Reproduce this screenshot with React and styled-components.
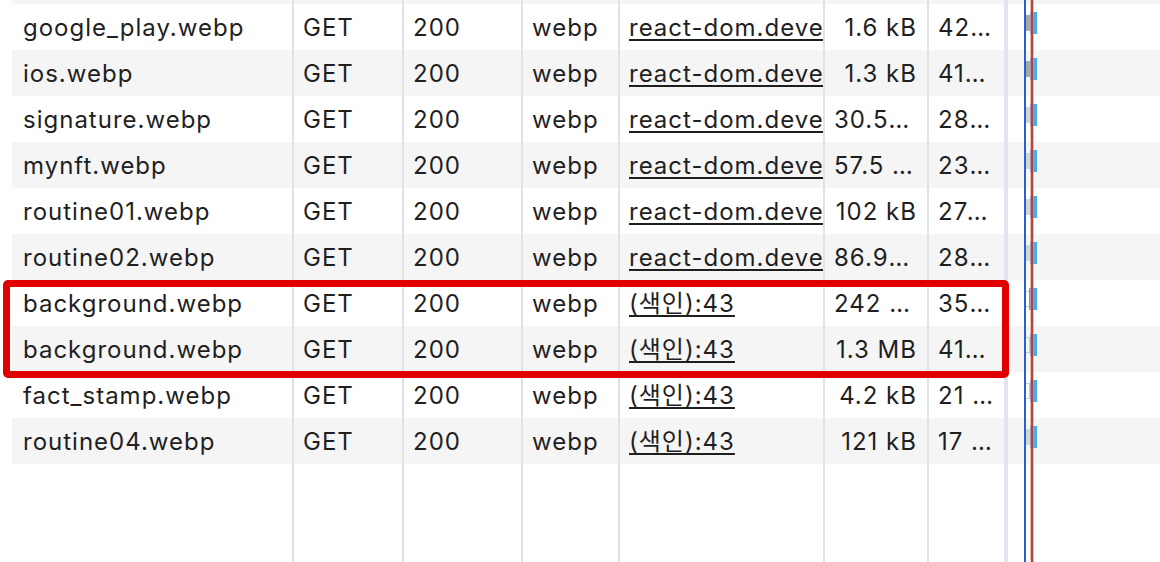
import React from 'react';
import styled, { createGlobalStyle } from 'styled-components';

const Global = createGlobalStyle`
  html, body { margin: 0; padding: 0; background: #fff; }
  body {
    font-family: Inter, "Noto Sans CJK KR", sans-serif;
    color: #1f1f1f;
    -webkit-font-smoothing: antialiased;
  }
`;

const COLS = '280px 110px 119px 97px 205px 104px 77px 1fr';

const Page = styled.div`
  position: relative;
  height: 562px;
  overflow: hidden;
  padding-left: 12px;
  display: flex;
  flex-direction: column;
  box-sizing: border-box;
`;

const Row = styled.div`
  display: grid;
  grid-template-columns: ${COLS};
  height: 46px;
  flex: none;
  background: ${(p) => (p.$striped ? '#f5f5f5' : '#ffffff')};
  &:first-child { margin-top: -42px; }
`;

const Filler = styled(Row)`
  flex: 1;
  height: auto;
  background: #fff;
`;

const Cell = styled.div`
  min-width: 0;
  box-sizing: border-box;
  border-left: ${(p) => (p.$first ? 'none' : '2px solid #e2e2e2')};
  padding: ${(p) => (p.$first ? '2px 10px 0 11px' : '2px 10px 0 9px')};
  font-size: 24px;
  letter-spacing: 1px;
  line-height: 44px;
  white-space: nowrap;
  overflow: hidden;
  text-overflow: ${(p) => (p.$clip ? 'clip' : 'ellipsis')};
  text-align: ${(p) => (p.$right ? 'right' : 'left')};
`;

const Link = styled.span`
  text-decoration: underline;
  text-decoration-thickness: 2px;
  text-underline-offset: 3px;
`;

const Waterfall = styled.div`
  min-width: 0;
  border-left: 4px solid #e2e5ed;
  display: flex;
  align-items: flex-start;
  padding: 8px 0 0 16px;
`;

const WaitBar = styled.div`
  width: 6px;
  height: 16px;
  margin-top: 3px;
  box-sizing: border-box;
  background: ${(p) => (p.$kind === 'solid' ? '#a8a8a8' : p.$kind === 'light' ? '#d4d4d4' : 'transparent')};
  border: ${(p) => (p.$kind === 'outline' ? '1px solid #c9c9c9' : 'none')};
`;

const GreenBar = styled.div`
  width: 1px;
  height: 22px;
  margin-left: -1px;
  background: #5fb85f;
`;

const LoadBar = styled.div`
  width: 7px;
  height: 22px;
  background: #4aabf2;
`;

const Marker = styled.div`
  position: absolute;
  top: 0;
  bottom: 0;
  left: ${(p) => p.$left}px;
  width: 2px;
  background: ${(p) => p.$color};
  box-shadow: ${(p) => p.$glow || 'none'};
`;

const Highlight = styled.div`
  position: absolute;
  left: 3px;
  top: 280px;
  width: 1006px;
  height: 98px;
  box-sizing: border-box;
  border: 7px solid #e10000;
  border-radius: 5px;
  pointer-events: none;
`;

const rows = [
  { name: 'google_play.webp', init: 'react-dom.development.js:26962', size: '1.6 kB', time: '427 ms', wait: 'solid' },
  { name: 'ios.webp', init: 'react-dom.development.js:26962', size: '1.3 kB', time: '415 ms', wait: 'solid' },
  { name: 'signature.webp', init: 'react-dom.development.js:26962', size: '30.5 kB', time: '283 ms', wait: 'light' },
  { name: 'mynft.webp', init: 'react-dom.development.js:26962', size: '57.5 kB', time: '236 ms', wait: 'light' },
  { name: 'routine01.webp', init: 'react-dom.development.js:26962', size: '102 kB', time: '274 ms', wait: 'light' },
  { name: 'routine02.webp', init: 'react-dom.development.js:26962', size: '86.9 kB', time: '281 ms', wait: 'light' },
  { name: 'background.webp', init: '(색인):43', size: '242 kB', time: '356 ms', wait: 'outline', green: true },
  { name: 'background.webp', init: '(색인):43', size: '1.3 MB', time: '412 ms', wait: 'outline' },
  { name: 'fact_stamp.webp', init: '(색인):43', size: '4.2 kB', time: '21 ms', wait: 'outline' },
  { name: 'routine04.webp', init: '(색인):43', size: '121 kB', time: '17 ms', wait: 'light' },
];

function EmptyCells() {
  return (
    <>
      <Cell $first />
      <Cell />
      <Cell />
      <Cell />
      <Cell />
      <Cell />
      <Cell />
      <Waterfall />
    </>
  );
}

export default function App() {
  return (
    <>
      <Global />
      <Page>
        <Row $striped>
          <EmptyCells />
        </Row>
        {rows.map((r, i) => (
          <Row key={i} $striped={i % 2 === 1}>
            <Cell $first>{r.name}</Cell>
            <Cell>GET</Cell>
            <Cell>200</Cell>
            <Cell>webp</Cell>
            <Cell $clip>
              <Link>{r.init}</Link>
            </Cell>
            <Cell $right>{r.size}</Cell>
            <Cell>{r.time}</Cell>
            <Waterfall>
              <WaitBar $kind={r.wait} />
              {r.green && <GreenBar />}
              <LoadBar />
            </Waterfall>
          </Row>
        ))}
        <Filler>
          <EmptyCells />
        </Filler>
        <Marker $left={1024} $color="#2b5fd0" />
        <Marker $left={1031} $color="#b3443a" $glow="0 0 0 1px rgba(232,140,130,0.55)" />
        <Highlight />
      </Page>
    </>
  );
}
